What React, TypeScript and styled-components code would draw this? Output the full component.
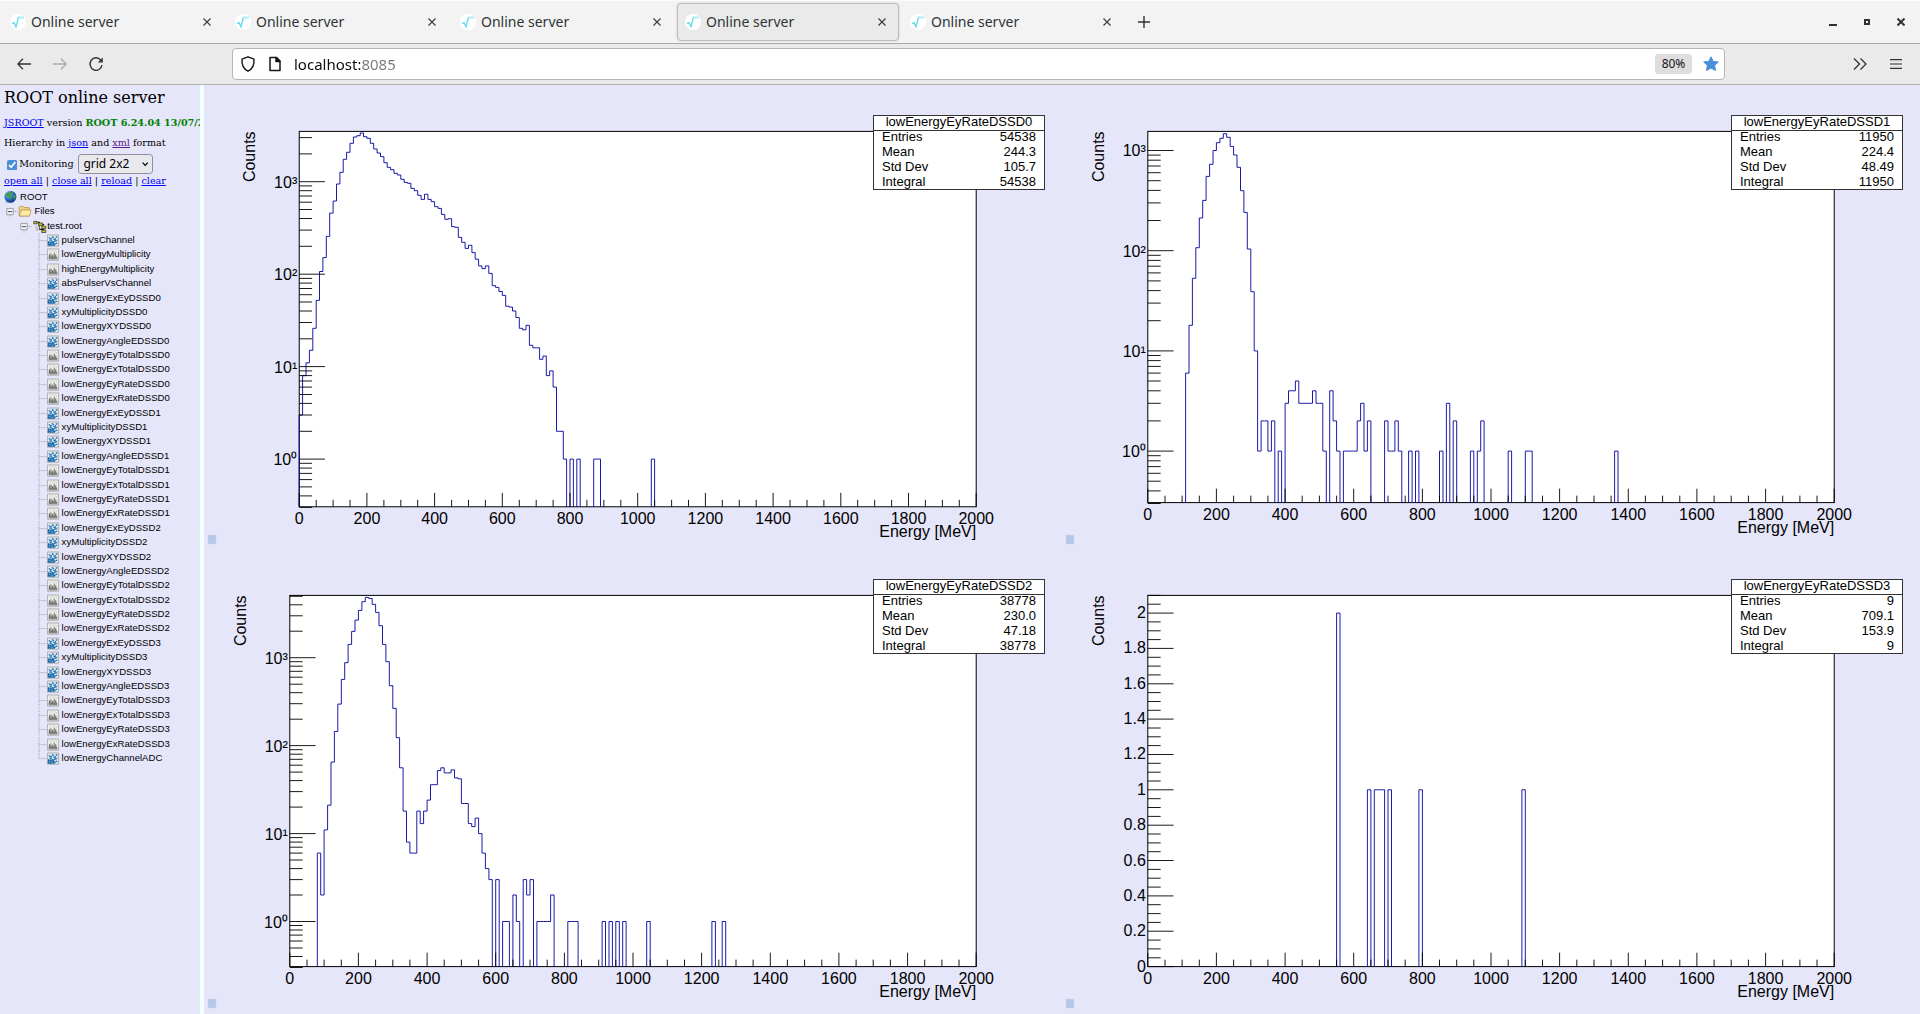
import React, { useLayoutEffect, useRef, useState } from "react";
import styled, { createGlobalStyle } from "styled-components";

const SANS = `"Noto Sans", "Open Sans", sans-serif`;
const SERIF = `"DejaVu Serif", serif`;
const ARIAL = `"Liberation Sans", Arial, sans-serif`;

const GlobalStyle = createGlobalStyle`
  *, *::before, *::after { box-sizing: border-box; }
  body { margin: 0; }
  button { border: 0; background: none; padding: 0; color: inherit; font: inherit; }
  svg { display: block; flex: none; }
`;

/* ---------- browser window ---------- */

const Window = styled.div`
  display: flex;
  flex-direction: column;
  height: 100vh;
  overflow: hidden;
  background: #e6e6fa;
  font-family: ${SANS};
  color: #2e3436;
`;

const TabBar = styled.header`
  display: flex;
  align-items: center;
  gap: 3px;
  height: 44px;
  flex: none;
  padding: 0 2px;
  background: #f3f3f3;
  border-top: 1px solid #fdfdfd;
  border-bottom: 1px solid #a9aaa7;
`;

const Tab = styled.div<{ $active?: boolean }>`
  display: flex;
  align-items: center;
  width: 222px;
  height: 38px;
  padding: 0 8px 0 7px;
  border: 1px solid ${(p) => (p.$active ? "#bcbcc4" : "transparent")};
  border-radius: 4px;
  background: ${(p) => (p.$active ? "#eaeaea" : "transparent")};
  box-shadow: ${(p) => (p.$active ? "0 0 2px #c4c4cc" : "none")};
`;

const TabTitle = styled.button`
  flex: 1;
  padding-left: 5px;
  text-align: left;
  font-size: 14px;
  line-height: 20px;
`;

const IconButton = styled.button<{ $size?: number }>`
  display: grid;
  place-items: center;
  width: ${(p) => p.$size ?? 34}px;
  height: ${(p) => p.$size ?? 34}px;
  flex: none;
`;

const WindowButtons = styled.div`
  display: flex;
  margin-left: auto;
`;

const NavBar = styled.nav`
  display: flex;
  align-items: center;
  height: 41px;
  flex: none;
  padding: 0 7px;
  background: #eaeaea;
  border-bottom: 1px solid #b3b3b0;
`;

const NavGroup = styled.div<{ $width: number; $end?: boolean }>`
  display: flex;
  gap: 2px;
  width: ${(p) => p.$width}px;
  flex: none;
  justify-content: ${(p) => (p.$end ? "flex-end" : "flex-start")};
`;

const UrlBox = styled.div`
  display: flex;
  align-items: center;
  flex: 1;
  height: 32px;
  padding: 0 5px 0 7px;
  gap: 11px;
  background: #fff;
  border: 1px solid #b6b6b3;
  border-radius: 4px;
`;

const UrlInput = styled.input`
  flex: 1;
  min-width: 0;
  padding: 0;
  border: 0;
  outline: 0;
  font: 15px/20px ${SANS};
  color: #15141a;
  background: linear-gradient(90deg, #0c0c0d 66px, #77777b 66px);
  background-clip: text;
  -webkit-background-clip: text;
  -webkit-text-fill-color: transparent;
`;

const ZoomBadge = styled.button`
  width: 37px;
  height: 20px;
  border-radius: 3px;
  background: #dedede;
  color: #15141a;
  font-size: 12px;
  line-height: 20px;
`;

/* ---------- page ---------- */

const Page = styled.main`
  display: flex;
  flex: 1;
  min-height: 0;
`;

const Sidebar = styled.aside`
  width: 200px;
  flex: none;
  overflow: hidden;
`;

/* The page is viewed at the 80% level shown in the address bar. */
const SidebarBody = styled.div`
  zoom: 0.8;
  padding: 0 0 0 5px;
  font: 12px/16px ${SERIF};
  color: #000;
  white-space: nowrap;
`;

const Splitter = styled.div`
  width: 4px;
  flex: none;
  background: #f0ffff;
`;

const Title = styled.h1`
  margin: 0 0 7px;
  font-size: 20px;
  font-weight: 400;
  line-height: 33px;
`;

const Line = styled.p`
  margin: 0 0 9px;
`;

const Version = styled.b`
  color: green;
`;

const Link = styled.a<{ $visited?: boolean }>`
  color: ${(p) => (p.$visited ? "#551a8b" : "#0000ee")};
`;

const FormRow = styled.div`
  display: flex;
  align-items: center;
  height: 26px;
  margin-top: -4px;
`;

const Check = styled.input`
  width: 13px;
  height: 13px;
  margin: 3px 2px 0 4px;
  accent-color: #4a90d9;
`;

const SelectWrap = styled.span`
  position: relative;
  margin-left: 5px;
`;

const Select = styled.select`
  display: block;
  appearance: none;
  width: 94px;
  height: 25px;
  padding: 0 6px;
  border: 1px solid #8f8f9d;
  border-radius: 4px;
  background: #e9e9ed;
  color: #000;
  font: 15px/20px ${SANS};
`;

const SelectArrow = styled.svg`
  position: absolute;
  right: 6px;
  top: 9px;
  pointer-events: none;
`;

const Tree = styled.ul`
  list-style: none;
  margin: 3px 0 0;
  padding: 0;
  font: 12px/18px ${ARIAL};
`;

const Node = styled.li<{ $depth: number }>`
  display: flex;
  height: 18px;
  padding-left: ${(p) => p.$depth * 18}px;
`;

const NodeLabel = styled.a<{ $gap?: number }>`
  padding-left: ${(p) => p.$gap ?? 0}px;
  color: #000;
  text-decoration: none;
`;

const Grid = styled.section`
  display: grid;
  flex: 1;
  min-width: 0;
  grid-template: 1fr 1fr / 1fr 1fr;
  padding-bottom: 1px;
`;

const Cell = styled.div`
  min-width: 0;
  min-height: 0;
  overflow: hidden;
`;

/* ---------- icons ---------- */

const Favicon = () => (
  <svg width="16" height="16" viewBox="0 0 16 16">
    <circle cx="8" cy="8" r="8" fill="#fff" />
    <path d="M2 9.600l2-1 2 4.200L8.400 3.500H14" fill="none" stroke="#5fdcec" strokeWidth="1.300" />
    <path d="M8.400 3.500H14" stroke="#b5eff6" strokeWidth="1.300" />
  </svg>
);
const Cross = () => (
  <svg width="8" height="8" viewBox="0 0 8 8" stroke="#3a3f41" strokeWidth="1.200">
    <path d="M.5.5l7 7M7.500.5l-7 7" />
  </svg>
);
const Arrow = ({ flip }: { flip?: boolean }) => (
  <svg width="14" height="12" viewBox="0 0 14 12" fill="none" stroke={flip ? "#a9abab" : "#2e3436"} strokeWidth="1.300">
    <path d={flip ? "M0 6h13M8 .8L13.200 6 8 11.200" : "M14 6H1M6 .8L.8 6 6 11.200"} />
  </svg>
);
const Reload = () => (
  <svg width="16" height="16" viewBox="0 0 16 16">
    <path d="M12.700 4A6 6.300 0 1 0 14 9" fill="none" stroke="#2e3436" strokeWidth="1.400" />
    <path d="M14.800 1.500v5H9.800z" fill="#2e3436" />
  </svg>
);
const Shield = () => (
  <svg width="16" height="16" viewBox="0 0 16 16" fill="none" stroke="#15141a" strokeWidth="1.400" strokeLinejoin="round">
    <path d="M8 .8L14 3.200c.5 5.200-1.300 9.500-6 12C3.300 12.700 1.500 8.400 2 3.200z" />
  </svg>
);
const Doc = () => (
  <svg width="16" height="16" viewBox="0 0 16 16" fill="none" stroke="#15141a" strokeWidth="1.500" strokeLinejoin="round">
    <path d="M3 1.500h6.500L13 5v9.500H3z" />
    <path d="M9 1.500V5.500h4z" fill="#15141a" />
  </svg>
);
const Star = () => (
  <svg width="16" height="16" viewBox="0 0 16 16">
    <path
      d="M8 .8l2.200 4.600 5.100.6-3.700 3.500 1 5L8 12.100l-4.600 2.400 1-5L.7 6l5.100-.6z"
      fill="#4a90d9"
      stroke="#4a90d9"
      strokeLinejoin="round"
    />
  </svg>
);

const Globe = () => (
  <svg width="18" height="18" viewBox="0 0 18 18">
    <defs>
      <radialGradient id="sea" cx="0.35" cy="0.3" r="0.8">
        <stop offset="0" stopColor="#9fd8f5" />
        <stop offset="0.5" stopColor="#2a72c4" />
        <stop offset="1" stopColor="#06215e" />
      </radialGradient>
    </defs>
    <ellipse cx="7" cy="15" rx="6" ry="1.500" fill="#9ccbea" />
    <circle cx="8" cy="8.500" r="7.500" fill="url(#sea)" />
    <path d="M5 3l4-1 2 2-2 3 1 2-2 3-2-3-3-1-1-3zM12 6l3 1-1 4-2 1z" fill="#3f9a52" />
  </svg>
);
const Folder = () => (
  <svg width="18" height="18" viewBox="0 0 18 18" stroke="#a9863c" strokeWidth="0.800">
    <path d="M1.500 15V4.500L2.500 3h4l1 1.500H14V15z" fill="#f2d27a" />
    <path d="M1.500 15L4 7.500h12.500L14.500 15z" fill="#ffe9a6" />
  </svg>
);
const FileTree = () => (
  <svg width="18" height="18" viewBox="0 0 18 18">
    <path d="M3 4h5v9h6M8 7h6" fill="none" stroke="#222" strokeWidth="1.400" />
    <path d="M3 8h5v7H3z" fill="#c9c9c4" />
    <g fill="#d8d020" stroke="#222" strokeWidth="0.900">
      <path d="M1 3h4v3H1zM7 5h5v3H7zM11 9h5v3h-5zM11 14h5v3h-5z" />
    </g>
  </svg>
);
const Hist1D = () => (
  <svg width="18" height="18" viewBox="0 0 18 18">
    <path d="M.5 2.500h14v14H.5z" fill="#efefec" stroke="#a0a09c" />
    <path d="M2 15.500h11V12H2z" fill="#858583" />
    <path d="M3 13V9M5 13V8M7 13V10M9 13V7M11 13V9" stroke="#5d5d5b" strokeWidth="1.200" />
    <path d="M4 4v3M7 4v2M10 4v2M12 5v2" stroke="#c4c4c1" />
  </svg>
);
const Hist2D = () => (
  <svg width="18" height="18" viewBox="0 0 18 18">
    <path d="M.5 2.500h14v14H.5z" fill="#dfeaf2" stroke="#a0a09c" />
    <path d="M1 16V10l3 1 2-2 3 3 1 4z" fill="#1f6dab" />
    <path
      d="M2 6h2M6 5h2M3 9h3M8 8h3M11 5h2M9 10h3M7 11h2M11 13h2M10 7h1M4 7h2M12 9h1M9 14h2M8 6h1"
      stroke="#1f6dab"
      strokeWidth="1.600"
    />
    <path d="M3 13h1M6 14h1M5 11h1" stroke="#dfeaf2" strokeWidth="1.200" />
  </svg>
);
const Minus = () => (
  <svg width="18" height="18" viewBox="0 0 18 18" stroke="#8c8c92">
    <path d="M12 9.500h6M7.500 14v4" strokeDasharray="1 1" />
    <path d="M3.500 5.500h8v8h-8z" fill="#f1f1f8" />
    <path d="M5 9.500h5" stroke="#222" />
  </svg>
);
const Join = ({ last }: { last?: boolean }) => (
  <svg width="18" height="18" viewBox="0 0 18 18" stroke="#8c8c92" strokeDasharray="1 1">
    <path d={last ? "M7.500 0v9" : "M7.500 0v18"} />
    <path d="M8 9.500h10" />
  </svg>
);

/* ---------- histograms ---------- */

type Bins = Record<number, number[]>;

interface Plot {
  name: string;
  stats: [string, string][];
  /* runs of consecutive bin contents, keyed by the first bin of the run */
  bins: Bins;
  min: number;
  max: number;
  log: boolean;
  left: number;
  bottom: number;
}

const stats = (n: string, mean: string, dev: string): [string, string][] => [
  ["Entries", n],
  ["Mean", mean],
  ["Std Dev", dev],
  ["Integral", n],
];

const PLOTS: Plot[] = [
  {
    name: "lowEnergyEyRateDSSD0",
    stats: stats("54538", "244.3", "105.7"),
    min: 0.305,
    max: 3500,
    log: true,
    left: 0.111,
    bottom: 0.909,
    bins: {
      0: [
        3, 8, 11, 15, 26, 52, 107, 151, 256, 458, 618, 944, 1263, 1746, 2078, 2600, 3045, 3148, 3364, 3070, 2945,
        2600, 2258, 2044, 1866, 1607, 1430, 1349, 1232, 1182, 1061, 984, 960, 847, 800, 712, 644, 730, 644, 608, 537,
        515, 443, 392, 398, 326, 321, 250, 221, 190, 205, 171, 145, 123, 115, 123, 102, 75, 72, 65, 59, 45, 44, 40,
        34, 26, 25, 28, 17, 16, 16, 12, 13, 8, 9, 6, 2, 2, 1,
      ],
      80: [1],
      82: [1],
      87: [1, 1],
      104: [1],
    },
  },
  {
    name: "lowEnergyEyRateDSSD1",
    stats: stats("11950", "224.4", "48.49"),
    min: 0.306,
    max: 1551,
    log: true,
    left: 0.1,
    bottom: 0.9,
    bins: {
      11: [
        6, 18, 53, 107, 212, 318, 552, 728, 1000, 1197, 1323, 1472, 1354, 1100, 902, 679, 397, 241, 104, 39, 10, 1, 2,
        2, 1, 2,
      ],
      38: [1],
      40: [3, 4, 4, 5, 3, 3, 3, 3, 4, 3, 3, 1],
      53: [4, 2, 1],
      57: [1, 1, 1, 1, 2, 3, 1, 2],
      69: [2, 1, 1, 2, 1],
      76: [1],
      78: [1],
      85: [1],
      87: [3],
      89: [2],
      94: [1],
      96: [1, 2],
      105: [1],
      110: [1, 1],
      136: [1],
    },
  },
  {
    name: "lowEnergyEyRateDSSD2",
    stats: stats("38778", "230.0", "47.18"),
    min: 0.307,
    max: 5113,
    log: true,
    left: 0.1,
    bottom: 0.9,
    bins: {
      8: [
        6, 2, 11, 21, 65, 145, 297, 566, 877, 1417, 1991, 2680, 3451, 4331, 4851, 4725, 4038, 3274, 2310, 1417, 900,
        480, 265, 123, 56, 18, 8, 6, 6, 18, 13, 18, 24, 36, 36, 52, 56, 49, 49, 53, 43, 42, 22, 22, 13, 12, 15, 10, 6,
        4, 3,
      ],
      60: [3],
      62: [1, 1],
      65: [2, 1],
      68: [3, 2, 3],
      72: [1, 1, 1, 1, 2],
      81: [1, 1, 1],
      91: [1],
      93: [1],
      95: [1],
      97: [1],
      104: [1],
      123: [1],
      126: [1],
    },
  },
  {
    name: "lowEnergyEyRateDSSD3",
    stats: stats("9", "709.1", "153.9"),
    min: 0,
    max: 2.1,
    log: false,
    left: 0.1,
    bottom: 0.9,
    bins: { 55: [2], 64: [1], 66: [1, 1, 1], 70: [1], 79: [1], 109: [1] },
  },
];

const POWERS = ["10⁰", "10¹", "10²", "10³"];
const range = (n: number) => Array.from({ length: n }, (_, i) => i);

function yTicks(p: Plot): { v: number; label?: string }[] {
  if (!p.log) {
    return range(43).map((i) => ({
      v: i * 0.05,
      label: i % 4 === 0 ? String(Math.round(i * 5) / 100) : undefined,
    }));
  }
  return range(5)
    .flatMap((d) =>
      range(9).map((m) => ({
        v: (m + 1) * 10 ** (d - 1),
        label: m === 0 && d > 0 ? POWERS[d - 1] : undefined,
      })),
    )
    .filter((t) => t.v >= p.min * 0.97 && t.v <= p.max);
}

function Histogram({ plot }: { plot: Plot }) {
  const ref = useRef<HTMLDivElement>(null);
  const [size, setSize] = useState({ w: 858, h: 464 });

  useLayoutEffect(() => {
    const el = ref.current;
    if (!el) return;
    const measure = () => setSize({ w: el.clientWidth, h: el.clientHeight });
    measure();
    const observer = new ResizeObserver(measure);
    observer.observe(el);
    return () => observer.disconnect();
  }, []);

  const { w, h } = size;
  const x0 = w * plot.left;
  const x1 = w * 0.9;
  const y0 = h * 0.1;
  const y1 = h * plot.bottom;
  const X = (bin: number) => x0 + ((x1 - x0) * bin) / 200;
  const scale = (v: number) => (plot.log ? Math.log10(v) : v);
  const Y = (v: number) =>
    v <= 0 ? y1 : y1 - ((y1 - y0) * (scale(v) - scale(plot.min))) / (scale(plot.max) - scale(plot.min));

  const path = Object.entries(plot.bins)
    .map(([start, run]) => {
      const s = Number(start);
      const steps = run.map((v, i) => `V${Y(v).toFixed(1)}H${X(s + i + 1).toFixed(1)}`).join("");
      return `M${X(s).toFixed(1)} ${y1}${steps}V${y1}`;
    })
    .join("");

  const xTicks = range(41)
    .map((i) => `M${X(i * 5).toFixed(1)} ${y1}v${-h * (i % 4 ? 0.015 : 0.03)}`)
    .join("");
  const ticks = yTicks(plot);
  const yPath = ticks
    .map((t) => `M${x0} ${Y(t.v).toFixed(1)}h${w * (t.label ? 0.03 : 0.015)}`)
    .join("");

  const bx = Math.round(w * 0.78);
  const by = Math.round(h * 0.065);
  const bw = Math.round(w * 0.2);

  return (
    <Cell ref={ref}>
      <svg width={w} height={h} fontFamily={ARIAL} fontSize="16" fill="#000" role="img" aria-label={plot.name}>
        <rect x={x0} y={y0} width={x1 - x0} height={y1 - y0} fill="#fff" stroke="#000" />
        <path d={path} fill="none" stroke="#0000a0" strokeWidth="0.900" />
        <path d={xTicks + yPath} fill="none" stroke="#000" strokeWidth="0.900" />
        {range(11).map((i) => (
          <text key={i} x={X(i * 20)} y={y1 + 17} textAnchor="middle">
            {i * 200}
          </text>
        ))}
        {ticks
          .filter((t) => t.label)
          .map((t) => (
            <text key={t.label} x={x0 - 2} y={Y(t.v) + (plot.log ? 6 : 5)} textAnchor="end">
              {t.label}
            </text>
          ))}
        <text x={x1} y={y1 + 30} textAnchor="end">
          Energy [MeV]
        </text>
        <text transform={`translate(${x0 - 44} ${y0}) rotate(-90)`} textAnchor="end">
          Counts
        </text>
        <rect x={bx + 0.5} y={by + 0.5} width={bw - 1} height="74" fill="#fff" stroke="#333" />
        <path d={`M${bx} ${by + 15.5}h${bw}`} stroke="#333" />
        <g fontSize="13">
          <text x={bx + bw / 2} y={by + 11} textAnchor="middle">
            {plot.name}
          </text>
          {plot.stats.map(([label, value], i) => (
            <React.Fragment key={label}>
              <text x={bx + 9} y={by + 26 + i * 15}>
                {label}
              </text>
              <text x={bx + bw - 9} y={by + 26 + i * 15} textAnchor="end">
                {value}
              </text>
            </React.Fragment>
          ))}
        </g>
        <rect x="4" y={h - 14} width="8" height="9" fill="#b5c7e6" stroke="#cdd8ef" strokeWidth="0.500" />
      </svg>
    </Cell>
  );
}

/* ---------- hierarchy ---------- */

const TWO_D = /VsChannel|ExEy|^xy|XY|Angle|ADC/;
const detector = (n: number) =>
  [
    "lowEnergyExEy",
    "xyMultiplicity",
    "lowEnergyXY",
    "lowEnergyAngleE",
    "lowEnergyEyTotal",
    "lowEnergyExTotal",
    "lowEnergyEyRate",
    "lowEnergyExRate",
  ].map((s) => `${s}DSSD${n}`);
const ITEMS = [
  "pulserVsChannel",
  "lowEnergyMultiplicity",
  "highEnergyMultiplicity",
  "absPulserVsChannel",
  ...range(4).flatMap(detector),
  "lowEnergyChannelADC",
];

export default function App() {
  return (
    <Window>
      <GlobalStyle />
      <TabBar>
        {range(5).map((i) => (
          <Tab key={i} $active={i === 3}>
            <Favicon />
            <TabTitle>Online server</TabTitle>
            <IconButton $size={16} aria-label="Close tab">
              <Cross />
            </IconButton>
          </Tab>
        ))}
        <IconButton aria-label="New tab">
          <svg width="12" height="12" viewBox="0 0 12 12" stroke="#2e3436" strokeWidth="1.400">
            <path d="M6 0v12M0 6h12" />
          </svg>
        </IconButton>
        <WindowButtons>
          <IconButton aria-label="Minimize">
            <svg width="8" height="8" viewBox="0 0 8 8">
              <path d="M0 6h8v2H0z" fill="#2e3436" />
            </svg>
          </IconButton>
          <IconButton aria-label="Maximize">
            <svg width="6" height="6" viewBox="0 0 6 6">
              <path d="M1 1h4v4H1z" fill="none" stroke="#2e3436" strokeWidth="2" />
            </svg>
          </IconButton>
          <IconButton aria-label="Close window">
            <svg width="8" height="8" viewBox="0 0 8 8" stroke="#2e3436" strokeWidth="2">
              <path d="M.5.5l7 7M7.500.5l-7 7" />
            </svg>
          </IconButton>
        </WindowButtons>
      </TabBar>
      <NavBar>
        <NavGroup $width={225}>
          <IconButton aria-label="Back">
            <Arrow />
          </IconButton>
          <IconButton aria-label="Forward">
            <Arrow flip />
          </IconButton>
          <IconButton aria-label="Reload">
            <Reload />
          </IconButton>
        </NavGroup>
        <UrlBox>
          <Shield />
          <Doc />
          <UrlInput aria-label="Address" defaultValue="localhost:8085" />
          <ZoomBadge>80%</ZoomBadge>
          <IconButton $size={16} aria-label="Bookmark">
            <Star />
          </IconButton>
        </UrlBox>
        <NavGroup $width={188} $end>
          <IconButton aria-label="More tools">
            <svg width="14" height="12" viewBox="0 0 14 12" fill="none" stroke="#2e3436" strokeWidth="1.300">
              <path d="M1 .5L6.500 6 1 11.500M7.500.5L13 6l-5.500 5.500" />
            </svg>
          </IconButton>
          <IconButton aria-label="Menu">
            <svg width="12" height="10" viewBox="0 0 12 10" stroke="#2e3436" strokeWidth="1.200">
              <path d="M0 .6h12M0 5h12M0 9.400h12" />
            </svg>
          </IconButton>
        </NavGroup>
      </NavBar>
      <Page>
        <Sidebar>
          <SidebarBody>
            <Title>ROOT online server</Title>
            <Line>
              <Link href="#jsroot">JSROOT</Link> version <Version>ROOT 6.24.04 13/07/2021</Version>
            </Line>
            <Line>
              Hierarchy in <Link href="#json">json</Link> and{" "}
              <Link href="#xml" $visited>
                xml
              </Link>{" "}
              format
            </Line>
            <FormRow>
              <Check type="checkbox" id="monitoring" defaultChecked />
              <label htmlFor="monitoring">Monitoring</label>
              <SelectWrap>
                <Select aria-label="Layout" defaultValue="grid 2x2">
                  <option>grid 2x2</option>
                </Select>
                <SelectArrow width="8" height="8" viewBox="0 0 8 8" fill="none" stroke="#000" strokeWidth="1.500">
                  <path d="M.8 2L4 5.500 7.200 2" />
                </SelectArrow>
              </SelectWrap>
            </FormRow>
            <div>
              <Link href="#open">open all</Link> | <Link href="#close">close all</Link> |{" "}
              <Link href="#reload">reload</Link> | <Link href="#clear">clear</Link>
            </div>
            <Tree>
              <Node $depth={0}>
                <Globe />
                <NodeLabel href="#root" $gap={2}>
                  ROOT
                </NodeLabel>
              </Node>
              <Node $depth={0}>
                <Minus />
                <Folder />
                <NodeLabel href="#files" $gap={2}>
                  Files
                </NodeLabel>
              </Node>
              <Node $depth={1}>
                <Minus />
                <FileTree />
                <NodeLabel href="#test">test.root</NodeLabel>
              </Node>
              {ITEMS.map((name, i) => (
                <Node key={name} $depth={2}>
                  <Join last={i === ITEMS.length - 1} />
                  {TWO_D.test(name) ? <Hist2D /> : <Hist1D />}
                  <NodeLabel href={`#${name}`}>{name}</NodeLabel>
                </Node>
              ))}
            </Tree>
          </SidebarBody>
        </Sidebar>
        <Splitter />
        <Grid>
          {PLOTS.map((p) => (
            <Histogram key={p.name} plot={p} />
          ))}
        </Grid>
      </Page>
    </Window>
  );
}
